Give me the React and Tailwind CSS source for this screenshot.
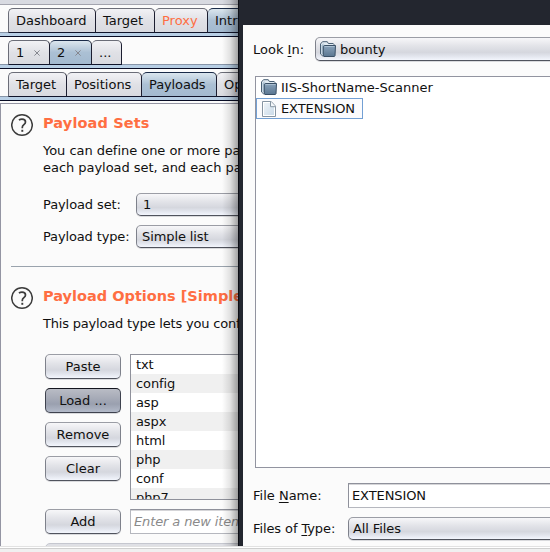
const tabBase =
  'h-[25px] shrink-0 rounded-t-[5px] border-t border-r border-[#6b6d78] border-r-[#1c1e30] border-b border-b-[#10142a] flex items-center pl-[7px] whitespace-pre first:border-l';
const tabIdle = 'bg-gradient-to-b from-[#f2f2f5] via-[#e0e1e6] to-[#d9dae0]';
const tabActive =
  'border-t-[#1a2b48] bg-gradient-to-b from-[#dbe6ee] via-[#abc0d4] to-[#a3bad0]';

function Tab({ width, active, accent, children }) {
  return (
    <div className={`${tabBase} ${width} ${active ? tabActive : tabIdle} ${accent ? 'text-[#ff6e42]' : ''}`}>
      {children}
    </div>
  );
}

function TabRow({ children }) {
  return (
    <div className="h-8 shrink-0">
      <div className="flex h-[25px] pl-2 bg-[linear-gradient(#8795a8,#8795a8)] bg-[length:100%_1px] bg-bottom bg-no-repeat">
        {children}
      </div>
      <div className="h-1 border-b border-[#080c24] bg-[#b8cfe5]" />
    </div>
  );
}

function Close() {
  return (
    <svg className="ml-[9.5px] mt-px" width="6" height="6" viewBox="0 0 6 6">
      <path d="M.4.4l5.2 5.2M5.6.4L.4 5.6" stroke="#85878f" strokeWidth="1" />
    </svg>
  );
}

function Help() {
  return (
    <svg className="shrink-0" width="22" height="24" viewBox="0 0 22 24" fill="none" stroke="#3c3c3c">
      <circle cx="11" cy="12" r="10.3" strokeWidth="1.5" />
      <path d="M7.9 7.1C8.9 6.5 9.9 6.2 11 6.2c2.1 0 3.5 1.1 3.5 2.7 0 2.6-3.2 2.8-3.2 5.3v1" strokeWidth="1.7" />
      <path d="M11.3 16.8v2" strokeWidth="1.9" />
    </svg>
  );
}

function Folder() {
  return (
    <svg className="shrink-0" width="16" height="16" viewBox="0 0 16 16">
      <defs>
        <linearGradient id="folder" x1="0" y1="0" x2="0" y2="1">
          <stop offset="0" stopColor="#8aa3bb" />
          <stop offset="1" stopColor="#5a7691" />
        </linearGradient>
      </defs>
      <path d="M.5 13V3L2.5.7H7.3L8.3 2.5h4.9l.8 1v2.2H4.5v9L2.5 14.8z" fill="#e2ebf2" stroke="#4a6075" />
      <path d="M1.5 12.6V4.2L3.5 2v12z" fill="#a9bfd1" />
      <path d="M3.3 5.3l.9-.8h11.3l-.5 10.3-.6.7H3.9l-.6-.7z" fill="url(#folder)" stroke="#3a5066" />
      <path d="M4.6 5.5h9.9" stroke="#adc1d2" strokeWidth=".9" />
    </svg>
  );
}

function FileIcon() {
  return (
    <svg className="shrink-0" width="16" height="16" viewBox="0 0 16 16">
      <defs>
        <linearGradient id="sheet" x1="0" y1="0" x2="1" y2="1">
          <stop offset="0" stopColor="#eef3f8" />
          <stop offset="1" stopColor="#cbdbe9" />
        </linearGradient>
      </defs>
      <path d="M1.5.5h8.7l4.3 4.6v10.4h-13z" fill="#fff" stroke="#8795a3" />
      <path d="M3 2h6.3v4H13v8H3z" fill="url(#sheet)" />
      <path d="M9.5.7v5h5" fill="#f5f8fb" stroke="#8795a3" />
    </svg>
  );
}

const raised =
  'border border-[#7e818b] border-t-[#9b9da5] border-b-[#50535d] bg-[linear-gradient(#f7f7f9,#e3e4e9_35%,#d5d7de_65%,#e0e3eb_80%,#f3f6fd)] shadow-[0_1px_0_#d9dadd]';

function Button({ children, pressed }) {
  return (
    <div
      className={`flex h-[25px] w-[76px] shrink-0 items-center justify-center rounded-[5px] ${
        pressed
          ? 'border border-[#3e424e] border-t-[#13151e] bg-[linear-gradient(#b9bcc5,#a9adb9_35%,#9aa0af_65%,#b3bac9)] shadow-[0_1px_0_#d9dadd]'
          : raised
      }`}
    >
      {children}
    </div>
  );
}

function Combo({ children, height, pad }) {
  return (
    <div className={`flex flex-1 items-center whitespace-nowrap rounded-l-[5px] border-r-0! ${raised} ${height} ${pad}`}>
      {children}
    </div>
  );
}

const payloads = ['txt', 'config', 'asp', 'aspx', 'html', 'php', 'conf', 'php7'];

function Background() {
  return (
    <div className="flex h-[546px] w-[238px] flex-col overflow-hidden bg-[#fbfbfb]">
      <div className="mb-[3px] h-[5px] shrink-0 border-b border-[#a3a4ae] bg-[#d8dae1]" />
      <TabRow>
        <Tab width="w-[88px]">Dashboard</Tab>
        <Tab width="w-[59px]">Target</Tab>
        <Tab width="w-[53px]" accent>Proxy</Tab>
        <Tab width="w-[70px]" active>Intruder</Tab>
      </TabRow>
      <TabRow>
        <Tab width="w-[42px]">1<Close /></Tab>
        <Tab width="w-[42px]" active>2<Close /></Tab>
        <Tab width="w-[30px]">...</Tab>
      </TabRow>
      <TabRow>
        <Tab width="w-[59px]">Target</Tab>
        <Tab width="w-[75px]">Positions</Tab>
        <Tab width="w-[75px]" active><span className="tracking-[-0.12px]">Payloads</span></Tab>
        <Tab width="w-[70px]">Options</Tab>
      </TabRow>
      <div className="-mt-px h-[443px] w-[400px] shrink-0 border-t border-l border-[#9495a3] pl-[10px]">
        <div className="flex pt-[9px]">
          <Help />
          <div className="ml-[10px] flex-1">
            <h2 className="text-[14.5px]/[20px] font-bold tracking-[0.12px] text-[#ff6e42]">Payload Sets</h2>
            <p className="mt-[9px] whitespace-pre leading-[17px] tracking-[-0.04px]">
              {'You can define one or more payload sets.\neach payload set, and each payload type'}
            </p>
            <div className="mt-[17px] flex items-center">
              <span className="w-[93px] tracking-[-0.1px]">Payload set:</span>
              <Combo height="h-[23px]" pad="pl-[6px]">1</Combo>
            </div>
            <div className="mt-[9px] flex items-center">
              <span className="w-[93px] tracking-[-0.14px]">Payload type:</span>
              <Combo height="h-[23px]" pad="pl-[5px]"><span className="tracking-[-0.1px]">Simple list</span></Combo>
            </div>
          </div>
        </div>
        <hr className="mt-[18px] border-[#9aa3ad]" />
        <div className="mt-[19px] flex">
          <Help />
          <h2 className="ml-[10px] whitespace-nowrap text-[14.5px]/[20px] font-bold text-[#ff6e42]">
            Payload Options [Simple list]
          </h2>
        </div>
        <p className="ml-8 mt-[5px] whitespace-nowrap leading-[17px] tracking-[-0.19px]">This payload type lets you configure a simple list</p>
        <div className="ml-[34px] mt-[22px] flex gap-[9px]">
          <div className="flex flex-col gap-[9px]">
            <Button>Paste</Button>
            <Button pressed>Load ...</Button>
            <Button>Remove</Button>
            <Button>Clear</Button>
          </div>
          <ul className="h-[146px] flex-1 overflow-hidden border border-[#8f919b] bg-white">
            {payloads.map((p) => (
              <li key={p} className="h-[19px] pl-[5px] leading-[19px] tracking-[-0.1px] even:bg-[#f0f0f0]">{p}</li>
            ))}
          </ul>
        </div>
        <div className="ml-[34px] mt-[9px] flex gap-[9px]">
          <Button>Add</Button>
          <div className="h-[25px] flex-1 border border-[#b5b7be] border-t-[#8f919b] bg-white pl-[3px] italic leading-[23px] tracking-[-0.12px] text-[#8a8a8a] shadow-[inset_0_1px_0_#d5d5d8]">
            Enter a new item
          </div>
        </div>
        <div className="ml-[34px] mt-[9px] h-6 w-[200px] rounded-[5px] border border-[#c5c7cf] bg-[#dfe0e5]" />
      </div>
    </div>
  );
}

function FileDialog() {
  return (
    <div className="absolute left-[238px] top-0 flex h-[546px] w-[312px] flex-col overflow-hidden border-l border-[#0d0e14] bg-[#23262f] pl-1">
      <div className="h-[25px] shrink-0" />
      <div className="flex-1 bg-[#fbfbfb] pl-[10px] pt-3">
        <div className="flex items-center">
          <span className="w-[62px]">Look <u className="underline-offset-2">I</u>n:</span>
          <Combo height="h-6" pad="pl-1 gap-1"><Folder />bounty</Combo>
        </div>
        <div className="ml-[2px] mt-[15px] h-[392px] border border-r-0 border-[#9294a0] bg-white">
          <div className="mb-px flex h-5 items-center gap-1 pl-[5px]"><Folder />IIS-ShortName-Scanner</div>
          <div className="flex h-[21px] w-[107px] items-center gap-1 border border-[#73a0d4] bg-[#fbfbfd] pl-1"><FileIcon /><span className="tracking-[-0.1px]">EXTENSION</span></div>
        </div>
        <div className="mt-[15px] flex items-center">
          <span className="w-[95px]">File <u className="underline-offset-2">N</u>ame:</span>
          <div className="h-[25px] flex-1 border border-r-0 border-[#b5b7be] border-t-[#8f919b] border-l-[#8f919b] bg-white pl-[3px] leading-[23px] tracking-[-0.1px] shadow-[inset_0_1px_0_#d5d5d8]">EXTENSION</div>
        </div>
        <div className="mt-[9px] flex items-center">
          <span className="w-[95px] tracking-[-0.1px]">Files of <u className="underline-offset-2">T</u>ype:</span>
          <Combo height="h-[23px]" pad="pl-1"><span className="tracking-[-0.1px]">All Files</span></Combo>
        </div>
      </div>
    </div>
  );
}

export default function App() {
  return (
    <div className="relative h-[552px] w-[550px] overflow-hidden bg-[#f0f0f0] font-['DejaVu_Sans',sans-serif] text-[13px]/[17px] text-[#101010]">
      <Background />
      <div className="absolute left-[222px] top-0 h-[546px] w-4 bg-[linear-gradient(to_right,transparent,rgba(0,0,0,.1)_50%,rgba(0,0,0,.35))]" />
      <FileDialog />
      <div className="h-[3px] border-y border-t-[#e2e2e2] border-b-[#cfcfcf] bg-white" />
    </div>
  );
}
